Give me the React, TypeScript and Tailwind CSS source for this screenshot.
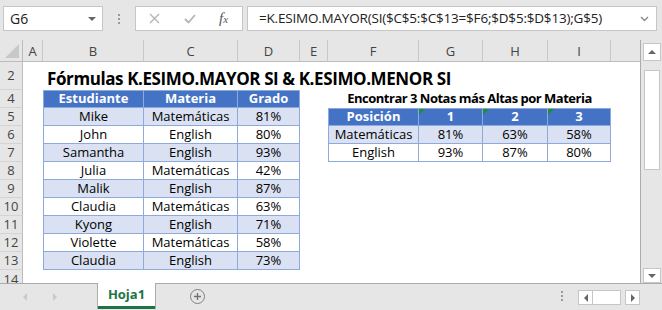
const W = {
  A: "w-[20px]",
  B: "w-[101px]",
  C: "w-[94px]",
  D: "w-[62px]",
  E: "w-[28px]",
  F: "w-[91px]",
  G: "w-[64px]",
  H: "w-[65px]",
  I: "w-[63px]",
  J: "w-[29px]",
};

const colHeads: [string, string][] = [
  ["A", W.A],
  ["B", W.B],
  ["C", W.C],
  ["D", W.D],
  ["E", W.E],
  ["F", W.F],
  ["G", W.G],
  ["H", W.H],
  ["I", W.I],
  ["", W.J],
];

const students = [
  ["Mike", "Matemáticas", "81%"],
  ["John", "English", "80%"],
  ["Samantha", "English", "93%"],
  ["Julia", "Matemáticas", "42%"],
  ["Malik", "English", "87%"],
  ["Claudia", "Matemáticas", "63%"],
  ["Kyong", "English", "71%"],
  ["Violette", "Matemáticas", "58%"],
  ["Claudia", "English", "73%"],
];

const topGrades = [
  ["Posición", "1", "2", "3"],
  ["Matemáticas", "81%", "63%", "58%"],
  ["English", "93%", "87%", "80%"],
];

function RowHead({ n }: { n: string }) {
  return (
    <div className="flex w-[23px] shrink-0 items-center justify-center border-b border-r border-b-[#d4d4d4] border-r-[#bcbcbc] bg-[#e6e6e6] text-[13px] text-[#444]">
      {n}
    </div>
  );
}

function Cell({
  w,
  text,
  head,
  band,
  first,
  top,
  flag,
}: {
  w: string;
  text: string;
  head?: boolean;
  band?: boolean;
  first?: boolean;
  top?: boolean;
  flag?: boolean;
}) {
  return (
    <div
      className={[
        "relative flex shrink-0 items-center justify-center border-b border-r border-[#8ea9db] text-[13px]",
        w,
        first ? "border-l" : "",
        top ? "border-t" : "",
        head ? "bg-[#4472c4] font-bold text-white" : band ? "bg-[#d9e1f2] text-black" : "bg-white text-black",
      ].join(" ")}
    >
      {flag && (
        <span className="absolute left-0 top-0 h-0 w-0 border-r-[6px] border-t-[6px] border-r-transparent border-t-[#1e8c3c]" />
      )}
      {text}
    </div>
  );
}

function Toolbar() {
  return (
    <div className="flex h-[40px] shrink-0 items-start pt-[6px]">
      <div className="ml-[3px] flex h-[25px] w-[100px] items-center justify-between border border-[#c6c6c6] bg-white pl-[6px] pr-[6px] text-[14px] text-[#222]">
        <span>G6</span>
        <span className="h-0 w-0 border-l-[4px] border-r-[4px] border-t-[4px] border-l-transparent border-r-transparent border-t-[#666]" />
      </div>
      <div className="flex h-[25px] w-[32px] flex-col items-center justify-center gap-[2px]">
        <span className="h-[2px] w-[2px] bg-[#9a9a9a]" />
        <span className="h-[2px] w-[2px] bg-[#9a9a9a]" />
        <span className="h-[2px] w-[2px] bg-[#9a9a9a]" />
      </div>
      <div className="flex h-[25px] w-[108px] items-center border border-[#c6c6c6] bg-white">
        <svg className="ml-[13px]" width="11" height="11" viewBox="0 0 11 11">
          <path d="M1 1 L10 10 M10 1 L1 10" stroke="#b4b4b4" strokeWidth="1.4" fill="none" />
        </svg>
        <svg className="ml-[24px]" width="12" height="10" viewBox="0 0 12 10">
          <path d="M1 5 L4.5 8.5 L11 1" stroke="#b4b4b4" strokeWidth="1.8" fill="none" />
        </svg>
        <span className="ml-[23px] font-['Liberation_Serif',serif] text-[15px] italic text-[#555]">
          f<span className="text-[11px]">x</span>
        </span>
      </div>
      <div className="ml-[4px] mr-[5px] flex h-[25px] flex-1 items-center justify-between border border-[#c6c6c6] bg-white pl-[11px] pr-[7px]">
        <span className="text-[13.5px] tracking-[-0.2px] text-[#222]">
          =K.ESIMO.MAYOR(SI($C$5:$C$13=$F6;$D$5:$D$13);G$5)
        </span>
        <svg width="9" height="6" viewBox="0 0 9 6">
          <path d="M1 1 L4.5 4.5 L8 1" stroke="#888" strokeWidth="1.4" fill="none" />
        </svg>
      </div>
    </div>
  );
}

function Sheet() {
  const rows = [4, 5, 6, 7, 8, 9, 10, 11, 12, 13];
  return (
    <div className="flex w-[641px] shrink-0 flex-col border-r border-[#ababab] bg-white">
      <div className="flex h-[22px] shrink-0 bg-[#e6e6e6]">
        <div className="relative w-[23px] shrink-0 border-b border-r border-[#bcbcbc]">
          <span className="absolute bottom-[3px] right-[3px] h-0 w-0 border-b-[14px] border-l-[14px] border-b-[#c8c8c8] border-l-transparent" />
        </div>
        {colHeads.map(([l, w], i) => (
          <div
            key={i}
            className={`flex shrink-0 items-center justify-center border-b border-b-[#bcbcbc] pt-[2px] text-[13px] text-[#444] ${w} ${l ? "border-r border-r-[#c8c8c8]" : ""}`}
          >
            {l}
          </div>
        ))}
      </div>

      <div className="flex h-[28px] shrink-0">
        <RowHead n="2" />
        <div className={`${W.A} shrink-0`} />
        <div className="flex items-center whitespace-nowrap pl-[4px] pt-[5px] text-[17px] font-bold tracking-[-0.4px] text-black">
          Fórmulas K.ESIMO.MAYOR SI &amp; K.ESIMO.MENOR SI
        </div>
      </div>

      {rows.map((r) => {
        const i = r - 5;
        const s = i >= 0 ? students[i] : ["Estudiante", "Materia", "Grado"];
        const head = r === 4;
        const band = r % 2 === 1;
        const g = r >= 5 && r <= 7 ? topGrades[r - 5] : null;
        return (
          <div key={r} className="flex h-[18px] shrink-0">
            <RowHead n={String(r)} />
            <div className={`${W.A} shrink-0`} />
            <Cell w={W.B} text={s[0]} head={head} band={band} first top={head} />
            <Cell w={W.C} text={s[1]} head={head} band={band} top={head} />
            <Cell w={W.D} text={s[2]} head={head} band={band} top={head} />
            <div className={`${W.E} shrink-0`} />
            {r === 4 ? (
              <div className="flex w-[283px] shrink-0 items-center justify-center text-[13px] font-bold tracking-[-0.5px] text-black">
                Encontrar 3 Notas más Altas por Materia
              </div>
            ) : g ? (
              <>
                <Cell w={W.F} text={g[0]} head={r === 5} band={r === 6} first top={r === 5} />
                <Cell w={W.G} text={g[1]} head={r === 5} band={r === 6} top={r === 5} flag={r === 5} />
                <Cell w={W.H} text={g[2]} head={r === 5} band={r === 6} top={r === 5} flag={r === 5} />
                <Cell w={W.I} text={g[3]} head={r === 5} band={r === 6} top={r === 5} flag={r === 5} />
              </>
            ) : (
              <div className="w-[283px] shrink-0" />
            )}
          </div>
        );
      })}

      <div className="flex flex-1">
        <RowHead n="14" />
      </div>
    </div>
  );
}

function VScroll() {
  return (
    <div className="flex flex-1 flex-col items-center bg-[#e6e6e6] pt-[3px]">
      <div className="flex h-[18px] w-[18px] items-center justify-center border border-[#c6c6c6] bg-white">
        <span className="h-0 w-0 border-b-[4px] border-l-[4px] border-r-[4px] border-b-[#666] border-l-transparent border-r-transparent" />
      </div>
      <div className="mt-[9px] h-[100px] w-[16px] border border-[#c6c6c6] bg-white" />
      <div className="flex-1" />
      <div className="flex h-[15px] w-[18px] items-center justify-center border border-[#c6c6c6] bg-white">
        <span className="h-0 w-0 border-l-[4px] border-r-[4px] border-t-[4px] border-l-transparent border-r-transparent border-t-[#666]" />
      </div>
    </div>
  );
}

function TabBar() {
  return (
    <div className="flex h-[27px] shrink-0 items-start border-t border-[#ababab] bg-[#e6e6e6]">
      <div className="flex h-[25px] w-[97px] shrink-0 items-center">
        <span className="ml-[23px] h-0 w-0 border-b-[4px] border-r-[4px] border-t-[4px] border-b-transparent border-r-[#c8c8c8] border-t-transparent" />
        <span className="ml-[26px] h-0 w-0 border-b-[4px] border-l-[4px] border-t-[4px] border-b-transparent border-l-[#c8c8c8] border-t-transparent" />
      </div>
      <div className="-mt-px flex h-[26px] w-[59px] shrink-0 flex-col border-l border-r border-[#ababab] bg-white">
        <div className="flex flex-1 items-center justify-center text-[13px] font-bold text-[#217346]">Hoja1</div>
        <div className="h-[3px] bg-[#217346]" />
      </div>
      <div className="ml-[34px] mt-[5px] flex h-[15px] w-[15px] items-center justify-center rounded-full border border-[#808080]">
        <svg width="9" height="9" viewBox="0 0 9 9">
          <path d="M4.5 1 V8 M1 4.5 H8" stroke="#707070" strokeWidth="1.3" />
        </svg>
      </div>
      <div className="flex-1" />
      <div className="mt-[7px] flex flex-col gap-[2px]">
        <span className="h-[2px] w-[2px] bg-[#9a9a9a]" />
        <span className="h-[2px] w-[2px] bg-[#9a9a9a]" />
        <span className="h-[2px] w-[2px] bg-[#9a9a9a]" />
      </div>
      <div className="ml-[15px] mt-[6px] flex h-[15px] items-stretch">
        <div className="flex w-[15px] items-center justify-center border border-[#c6c6c6] bg-white">
          <span className="h-0 w-0 border-b-[4px] border-r-[4px] border-t-[4px] border-b-transparent border-r-[#666] border-t-transparent" />
        </div>
        <div className="w-[28px] border border-l-0 border-[#c6c6c6] bg-white" />
        <div className="ml-[4px] flex w-[15px] items-center justify-center border border-[#c6c6c6] bg-white">
          <span className="h-0 w-0 border-b-[4px] border-l-[4px] border-t-[4px] border-b-transparent border-l-[#666] border-t-transparent" />
        </div>
      </div>
      <div className="w-[22px]" />
    </div>
  );
}

export default function App() {
  return (
    <div className="flex h-[310px] w-[662px] flex-col overflow-hidden bg-[#e6e6e6] font-['Open_Sans',sans-serif]">
      <Toolbar />
      <div className="flex h-[243px] shrink-0">
        <Sheet />
        <VScroll />
      </div>
      <TabBar />
    </div>
  );
}
